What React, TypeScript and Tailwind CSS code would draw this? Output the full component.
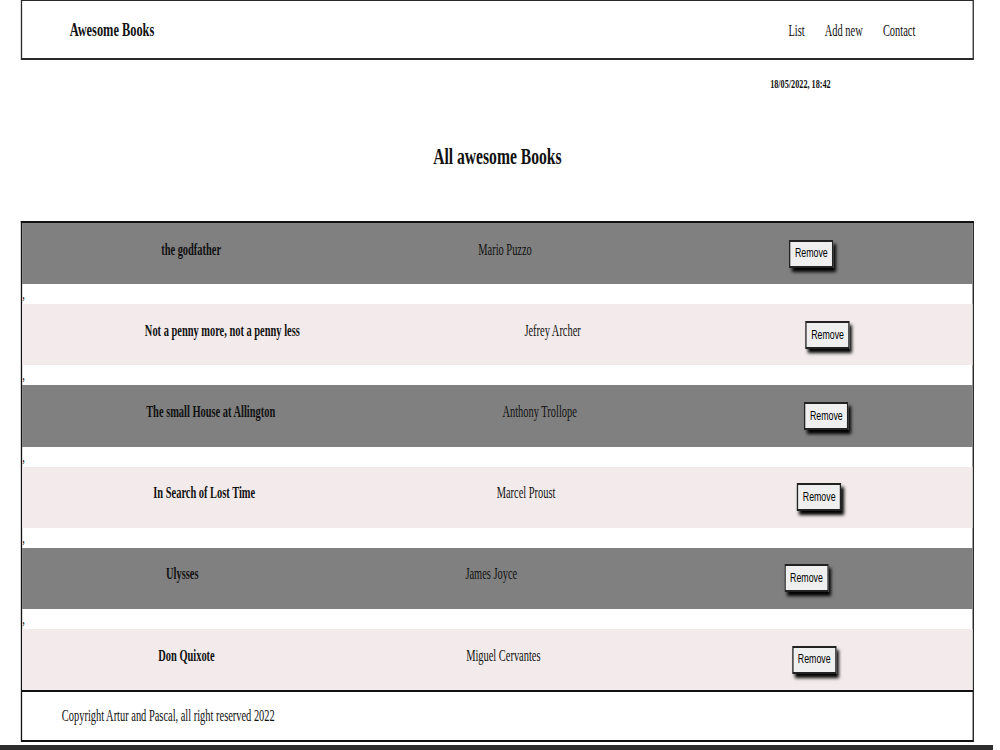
const books = [
  { title: 'the godfather', author: 'Mario Puzzo' },
  { title: 'Not a penny more, not a penny less', author: 'Jefrey Archer' },
  { title: 'The small House at Allington', author: 'Anthony Trollope' },
  { title: 'In Search of Lost Time', author: 'Marcel Proust' },
  { title: 'Ulysses', author: 'James Joyce' },
  { title: 'Don Quixote', author: 'Miguel Cervantes' },
];

const BookRow = ({ title, author, index }) => {
  const bg = index % 2 === 0 ? 'bg-[#808080]' : 'bg-[#f3ebeb]';
  return (
    <div className={`flex h-[61.2px] items-center justify-around px-4 ${bg}`}>
      <p className="mb-2 text-base font-bold">{title}</p>
      <p className="mb-2 text-base">{author}</p>
      <button
        type="button"
        className="h-[28px] border-2 border-[#222] bg-[#efefef] px-[7px] font-['Liberation_Sans',Arial,sans-serif] text-[13.5px] text-black shadow-[4px_4px_4px_#000]">
        Remove
      </button>
    </div>
  );
};

export default function App() {
  return (
    <div className="flex h-[750px] w-[1000px] flex-col overflow-hidden bg-white">
      {/* the page is rendered wide and squeezed, like the reference capture */}
      <div className="w-[1536px] shrink-0 origin-left scale-x-[0.651] font-['Liberation_Serif','Times_New_Roman',serif] text-[#111]">
        <header className="mx-[32px] flex h-[60px] w-[1464px] items-center justify-between border-x-2 border-t border-b-2 border-[#2a2a2a] pl-[73px] pr-[88px]">
          <h1 className="mt-[2px] text-[19px] font-bold">Awesome Books</h1>
          <nav className="mt-[2px] flex gap-[31px] text-base">
            <a href="#list">List</a>
            <a href="#add">Add new</a>
            <a href="#contact">Contact</a>
          </nav>
        </header>

        <p className="mt-[17px] pl-[1183px] text-[12.6px] font-bold leading-[15px]">
          18/05/2022, 18:42
        </p>

        <h2 className="mx-[32px] mt-[50px] w-[1464px] text-center text-2xl font-bold leading-7">
          All awesome Books
        </h2>

        <section className="mx-[32px] mt-[51px] w-[1464px] border-x-2 border-t-2 border-[#111]">
          {books.map((book, index) => (
            <div key={book.title}>
              {index > 0 && <p className="h-5 text-base leading-5">,</p>}
              <BookRow title={book.title} author={book.author} index={index} />
            </div>
          ))}
        </section>

        <footer className="mx-[32px] flex h-[52px] w-[1464px] items-center border-2 border-[#111] pl-[61px]">
          <p className="text-base">Copyright Artur and Pascal, all right reserved 2022</p>
        </footer>
      </div>
      <div className="mt-auto h-[5px] w-[993px] bg-[#2d2d2d]" />
    </div>
  );
}
